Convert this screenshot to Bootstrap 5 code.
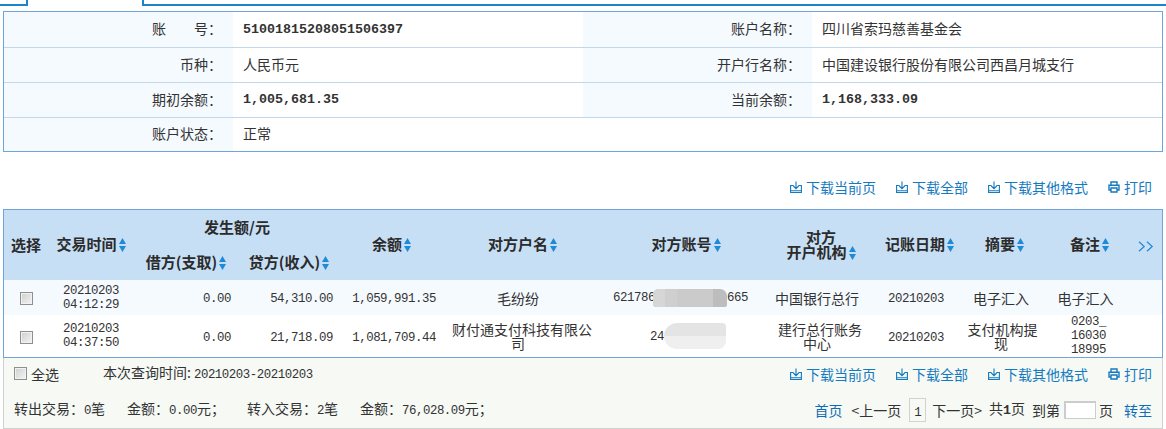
<!DOCTYPE html>
<html lang="zh">
<head>
<meta charset="utf-8">
<title>账户明细</title>
<link href="https://cdn.jsdelivr.net/npm/bootstrap@5.3.0/dist/css/bootstrap.min.css" rel="stylesheet">
<style>
html,body{height:429px;overflow:hidden}
body{margin:0;background:#fff;color:#333;font:14px/14px "Noto Sans CJK SC","Liberation Sans",sans-serif}
.num{font:12.4px/14px "Liberation Mono","Noto Sans CJK SC",monospace;letter-spacing:-.45px}
.numb{font:bold 13.33px/14px "Liberation Mono","Noto Sans CJK SC",monospace;letter-spacing:0}
.tabline{height:6px;margin-bottom:5px}
.tab-l{width:28px;border-bottom:2px solid #1a85c9;border-right:2px solid #1a85c9}
.tab-m{width:114px}
.tab-r{flex:1;border-bottom:2px solid #1a85c9;border-left:2px solid #1a85c9}
.pagewrap{padding:0 3px}
.infobox{border:1px solid #6ea6da;height:141px}
.infotbl{table-layout:fixed;width:100%;margin:0;border-collapse:collapse}
.infotbl>tbody>tr>td{height:35px;padding:0 0 2px;border:0;border-bottom:1px solid #c3d7ea;vertical-align:middle;color:#333;background:#fff}
.infotbl>tbody>tr:last-child>td{border-bottom:0;height:34px}
.infotbl>tbody>tr>td.lab{background:#f5faff;text-align:right;padding-right:11px}
.infotbl>tbody>tr>td.val{padding-left:10px}
.c-l1{width:229px}.c-v1{width:350px}.c-l2{width:229px}
.tools{height:20px;margin-top:25px;margin-bottom:12px;padding-right:11px;gap:20px}
.tools a{color:#157ac0;text-decoration:none;display:flex;align-items:center;gap:4px}
.ico{width:12px;height:12px;flex:none}
.gridbox{border:1px solid #6ea6da;height:149px}
.gridtbl{table-layout:fixed;width:100%;margin:0;border-collapse:collapse}
.gridtbl>thead>tr>th{background:#c7dff5;border:0;padding:0 0 2px;text-align:center;vertical-align:middle;font-size:15px;line-height:15px;font-weight:700;color:#2b2b2b;white-space:nowrap;height:35px}
.gridtbl>tbody>tr>td{border:0;padding:0;text-align:center;vertical-align:middle;color:#333;line-height:14px;background:#fff}
.gridtbl>tbody>tr.r1>td{background:#f5faff;height:35px}
.gridtbl>tbody>tr.r2>td{height:42px}
.gridtbl>tbody>tr>td.amt{text-align:right;padding-right:7px}
.w1{width:44px}.w2{width:86px}.w3{width:104px}.w4{width:102px}.w5{width:103px}.w6{width:150px}.w7{width:177px}.w8{width:94px}.w9{width:100px}.w10{width:74px}.w11{width:95px}.w12{width:29px}
.srt{width:7px;height:14px;margin-left:2px;vertical-align:-2px}
.gridtbl>thead>tr>th.shr6{padding-left:9px}
.gridtbl>thead>tr>th.shr8{padding-left:8px}
.gridtbl>thead>tr>th.shr9{padding-left:11px}
.gridtbl>thead>tr>th.shr10{padding-left:7px}
.gridtbl>thead>tr>th.shr11{padding-left:8px}
.gridtbl>thead>tr>th.morecol{padding-right:4px}
.more{width:16px;height:11px;color:#1f8ad6;vertical-align:middle}
.gridtbl>tbody>tr>td.date9{padding-left:4px}
.gridtbl>tbody>tr>td.wrap6{text-indent:8px}
.gridtbl>tbody>tr>td.wrap8{padding:0 2px;text-indent:6px}
.gridtbl>tbody>tr>td.wrap10{text-indent:3px}
.gridtbl>tbody>tr>td.acc{padding-right:2px}
.gridtbl>tbody>tr>td.note{padding-left:6px}
.tick{appearance:none;-webkit-appearance:none;width:13px;height:13px;margin:0;vertical-align:middle;border:1px solid #8e8f8f;background:linear-gradient(135deg,#cfcfcf,#f4f4f4);box-shadow:inset 0 0 0 1px #f2f2f2;display:inline-block}
.blur1{display:inline-block;vertical-align:middle;width:74px;height:18px;margin:0 0 0 -2px;border-radius:5px 7px 2px 2px;background:linear-gradient(90deg,#d6d6d6 0 12px,#cfcfcf 12px 24px,#cbcbcb 24px 60px,#bdbdbd 60px)}
.blur2{display:inline-block;vertical-align:middle;width:62px;height:26px;margin-right:-13px;border-radius:13px 4px 8px 13px;background:linear-gradient(180deg,#e4e4e4 0 50%,#efefef 50%)}
.footbox{height:71px;background:#f6f9f4;border:1px solid #cfd2cf;border-top:0;padding:0 10px}
.frow{height:35px;padding-bottom:2px}
.frow-a{padding-bottom:4px}
.fleft{color:#333}
.qtime{margin-left:44px}
.qdate{margin-left:3px}
.sumgap1{margin-left:22px}.sumgap2{margin-left:22px}
.pager a{color:#0f6cb5;text-decoration:none}
.pg-prev{margin-left:9px}
.pg-box{display:inline-block;width:17px;height:24px;line-height:22px;text-align:center;border:1px solid #d2d2d2;margin:0 6px 0 8px}
.pg-in{width:32px;height:18px;background:#fff;border:1px solid #ccc;border-top-width:2px;border-left-width:2px;margin:0 3px 0 4px;display:inline-block}
.pg-tot{margin-left:7px}.pg-to{margin-left:7px}
.gopage{margin-left:11px}
</style>
</head>
<body>
<svg width="0" height="0" class="position-absolute">
  <symbol id="dl" viewBox="0 0 12 12"><path d="M6 .5v7M3.300 5 6 7.700 8.700 5M3.500 4.500H.6v7h10.800v-7H8.500M.6 9.800h10.800" fill="none" stroke="currentColor" stroke-width="1.100"/></symbol>
  <symbol id="pr" viewBox="0 0 12 12"><path d="M3 4V1h6v3M3 9H1V4.200h10V9H9M3 7h6v4H3z" fill="none" stroke="currentColor" stroke-width="1.400"/></symbol>
  <symbol id="sort" viewBox="0 0 7 14"><path d="M3.500 0 7 6H0zM0 8h7l-3.500 6z" fill="#1f8ad6"/></symbol>
  <symbol id="chev" viewBox="0 0 16 11"><path d="M1 .8 6.200 5.500 1 10.200M9 .8l5.200 4.700L9 10.200" fill="none" stroke="currentColor" stroke-width="1.200"/></symbol>
</svg>

<div class="tabline d-flex"><div class="tab-l"></div><div class="tab-m"></div><div class="tab-r"></div></div>

<div class="pagewrap">
  <div class="infobox">
    <table class="table infotbl">
      <colgroup><col class="c-l1"><col class="c-v1"><col class="c-l2"><col></colgroup>
      <tbody>
        <tr><td class="lab">账&emsp;&emsp;号：</td><td class="val"><span class="numb">51001815208051506397</span></td><td class="lab">账户名称：</td><td class="val">四川省索玛慈善基金会</td></tr>
        <tr><td class="lab">币种：</td><td class="val">人民币元</td><td class="lab">开户行名称：</td><td class="val">中国建设银行股份有限公司西昌月城支行</td></tr>
        <tr><td class="lab">期初余额：</td><td class="val"><span class="numb">1,005,681.35</span></td><td class="lab">当前余额：</td><td class="val"><span class="numb">1,168,333.09</span></td></tr>
        <tr><td class="lab">账户状态：</td><td class="val">正常</td><td></td><td></td></tr>
      </tbody>
    </table>
  </div>

  <div class="tools d-flex justify-content-end align-items-center">
    <a href="#"><svg class="ico"><use href="#dl"/></svg>下载当前页</a>
    <a href="#"><svg class="ico"><use href="#dl"/></svg>下载全部</a>
    <a href="#"><svg class="ico"><use href="#dl"/></svg>下载其他格式</a>
    <a href="#"><svg class="ico"><use href="#pr"/></svg>打印</a>
  </div>

  <div class="gridbox">
    <table class="table gridtbl">
      <colgroup><col class="w1"><col class="w2"><col class="w3"><col class="w4"><col class="w5"><col class="w6"><col class="w7"><col class="w8"><col class="w9"><col class="w10"><col class="w11"><col class="w12"></colgroup>
      <thead>
        <tr>
          <th rowspan="2">选择</th>
          <th rowspan="2">交易时间<svg class="srt"><use href="#sort"/></svg></th>
          <th colspan="2">发生额/元</th>
          <th rowspan="2">余额<svg class="srt"><use href="#sort"/></svg></th>
          <th rowspan="2" class="shr6">对方户名<svg class="srt"><use href="#sort"/></svg></th>
          <th rowspan="2" class="shr6">对方账号<svg class="srt"><use href="#sort"/></svg></th>
          <th rowspan="2" class="shr8">对方<br>开户机构<svg class="srt"><use href="#sort"/></svg></th>
          <th rowspan="2" class="shr9">记账日期<svg class="srt"><use href="#sort"/></svg></th>
          <th rowspan="2" class="shr10">摘要<svg class="srt"><use href="#sort"/></svg></th>
          <th rowspan="2" class="shr11">备注<svg class="srt"><use href="#sort"/></svg></th>
          <th rowspan="2" class="morecol"><svg class="more"><use href="#chev"/></svg></th>
        </tr>
        <tr>
          <th>借方(支取)<svg class="srt"><use href="#sort"/></svg></th>
          <th>贷方(收入)<svg class="srt"><use href="#sort"/></svg></th>
        </tr>
      </thead>
      <tbody>
        <tr class="r1">
          <td><input class="tick" type="checkbox"></td>
          <td><span class="num d-block">20210203<br>04:12:29</span></td>
          <td class="amt"><span class="num">0.00</span></td>
          <td class="amt"><span class="num">54,310.00</span></td>
          <td class="amt"><span class="num">1,059,991.35</span></td>
          <td>毛纷纷</td>
          <td class="acc"><span class="num">621786</span><span class="blur1"></span><span class="num">665</span></td>
          <td>中国银行总行</td>
          <td class="date9"><span class="num">20210203</span></td>
          <td>电子汇入</td>
          <td>电子汇入</td>
          <td></td>
        </tr>
        <tr class="r2">
          <td><input class="tick" type="checkbox"></td>
          <td><span class="num d-block">20210203<br>04:37:50</span></td>
          <td class="amt"><span class="num">0.00</span></td>
          <td class="amt"><span class="num">21,718.09</span></td>
          <td class="amt"><span class="num">1,081,709.44</span></td>
          <td class="wrap6">财付通支付科技有限公司</td>
          <td><span class="num">24</span><span class="blur2"></span></td>
          <td class="wrap8">建行总行账务中心</td>
          <td class="date9"><span class="num">20210203</span></td>
          <td class="wrap10">支付机构提现</td>
          <td class="note"><span class="num d-block">0203_<br>16030<br>18995</span></td>
          <td></td>
        </tr>
      </tbody>
    </table>
  </div>

  <div class="footbox">
    <div class="frow frow-a d-flex justify-content-between align-items-center">
      <div class="d-flex align-items-center">
        <input class="tick me-1" type="checkbox"><span>全选</span>
        <span class="qtime fleft">本次查询时间:<span class="num qdate">20210203-20210203</span></span>
      </div>
      <div class="tools d-flex justify-content-end align-items-center m-0 p-0">
        <a href="#"><svg class="ico"><use href="#dl"/></svg>下载当前页</a>
        <a href="#"><svg class="ico"><use href="#dl"/></svg>下载全部</a>
        <a href="#"><svg class="ico"><use href="#dl"/></svg>下载其他格式</a>
        <a href="#"><svg class="ico"><use href="#pr"/></svg>打印</a>
      </div>
    </div>
    <div class="frow d-flex justify-content-between align-items-center">
      <div class="d-flex fleft">
        <span>转出交易：<span class="num">0</span>笔</span>
        <span class="sumgap1">金额：<span class="num">0.00</span>元；</span>
        <span class="sumgap2">转入交易：<span class="num">2</span>笔</span>
        <span class="sumgap1">金额：<span class="num">76,028.09</span>元；</span>
      </div>
      <div class="pager d-flex align-items-center">
        <a href="#">首页</a>
        <span class="pg-prev">&lt;上一页</span><span class="pg-box"><span class="num">1</span></span><span>下一页&gt;</span>
        <span class="pg-tot">共<span class="numb">1</span>页</span>
        <span class="pg-to">到第</span><span class="pg-in"></span><span>页</span>
        <a href="#" class="gopage">转至</a>
      </div>
    </div>
  </div>
</div>
</body>
</html>
